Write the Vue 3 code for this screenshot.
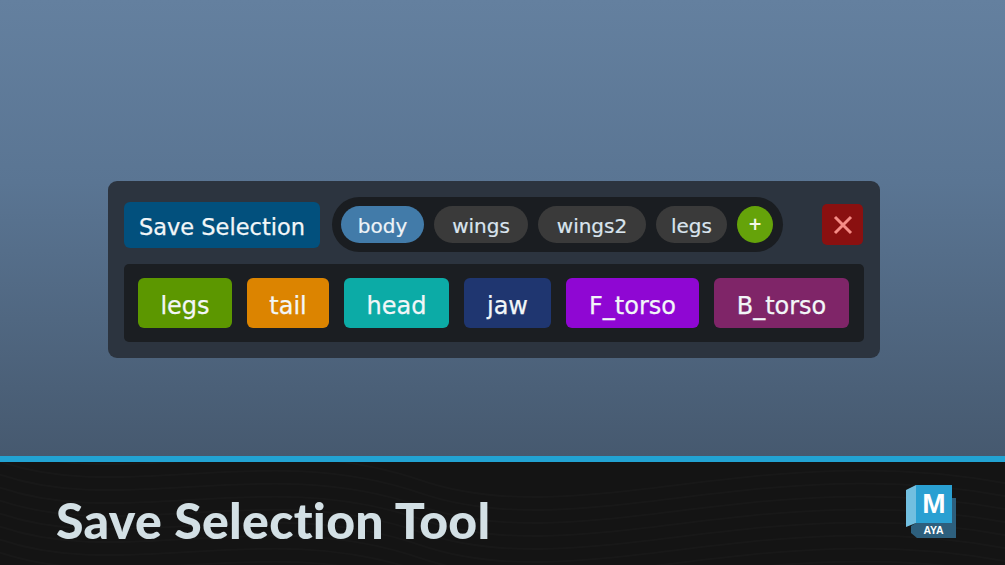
<template>
  <div class="page">
    <div class="stage">
      <div class="panel">
        <div class="top-row">
          <button class="save-btn">Save Selection</button>
          <div class="chip-tray">
            <span
              v-for="chip in chips"
              :key="chip.label"
              class="chip"
              :class="{ active: chip.active }"
              :style="{ width: chip.width + 'px' }"
            >{{ chip.label }}</span>
            <span class="add-btn">+</span>
          </div>
          <button class="close-btn" aria-label="Close">
            <svg width="20" height="20" viewBox="0 0 20 20">
              <path d="M2 2L18 18M18 2L2 18" stroke="#f58c86" stroke-width="3" fill="none" />
            </svg>
          </button>
        </div>
        <div class="set-row">
          <button
            v-for="item in sets"
            :key="item.label"
            class="set-btn"
            :style="{ width: item.width + 'px', background: item.color }"
          >{{ item.label }}</button>
        </div>
      </div>
    </div>
    <div class="rule"></div>
    <div class="footer">
      <svg class="waves" width="1005" height="103" viewBox="0 0 1005 103">
        <path
          v-for="n in 9"
          :key="n"
          :d="`M-10 ${n * 13 - 30} C 120 ${n * 13 + 20}, 260 ${n * 13 - 50}, 420 ${n * 13 + 5} S 760 ${n * 13 - 40}, 1015 ${n * 13 + 10}`"
          fill="none"
          stroke="#ffffff"
          stroke-opacity="0.018"
          stroke-width="2"
        />
      </svg>
      <h1 class="title">Save Selection Tool</h1>
      <svg class="logo" width="50" height="53" viewBox="0 0 50 53">
        <path d="M5 41L5 48L11 53L50 53L50 13L46 13L46 38L10 38Z" fill="#2d5f7d" />
        <path d="M0 5L10 0L10 38L0 42Z" fill="#72bfe0" />
        <path d="M10 0H46V38H10Z" fill="#2aa0d2" />
        <text x="28" y="28" class="logo-m">M</text>
        <text x="27.5" y="49" class="logo-aya">AYA</text>
      </svg>
    </div>
  </div>
</template>

<script setup>
const chips = [
  { label: 'body', width: 83, active: true },
  { label: 'wings', width: 94 },
  { label: 'wings2', width: 108 },
  { label: 'legs', width: 71 }
]

const sets = [
  { label: 'legs', width: 94, color: '#5c9700' },
  { label: 'tail', width: 82, color: '#dc8400' },
  { label: 'head', width: 105, color: '#0caba6' },
  { label: 'jaw', width: 87, color: '#1f3670' },
  { label: 'F_torso', width: 133, color: '#8f07d3' },
  { label: 'B_torso', width: 135, color: '#7f2568' }
]
</script>

<style>
html, body {
  margin: 0;
  background: #141414;
  overflow: hidden;
}
</style>

<style scoped>
.page {
  width: 1005px;
  height: 565px;
  display: flex;
  flex-direction: column;
  font-family: "DejaVu Sans", sans-serif;
}

.stage {
  height: 456px;
  box-sizing: border-box;
  padding: 181px 0 0 108px;
  background: linear-gradient(to bottom, #64809f 0%, #5a7593 40%, #46596f 100%);
}

.panel {
  width: 772px;
  box-sizing: border-box;
  padding: 16px;
  display: flex;
  flex-direction: column;
  gap: 12px;
  background: #2c343f;
  border-radius: 9px;
}

.top-row {
  display: flex;
  align-items: center;
  height: 55px;
}

button {
  border: none;
  padding: 0;
  font-family: inherit;
  color: #f2f6f8;
  -webkit-text-stroke: 0.25px currentColor;
}

.save-btn {
  width: 196px;
  height: 46px;
  padding-top: 5px;
  background: #02507d;
  border-radius: 6px;
  font-size: 22.5px;
}

.chip-tray {
  width: 451px;
  height: 55px;
  box-sizing: border-box;
  margin-left: 12px;
  padding-left: 9px;
  display: flex;
  align-items: center;
  gap: 10px;
  background: #1a1d21;
  border-radius: 28px;
}

.chip {
  height: 37px;
  line-height: 41px;
  text-align: center;
  border-radius: 19px;
  background: #3a3a3a;
  color: #d9e4ee;
  font-size: 20px;
  -webkit-text-stroke: 0.2px currentColor;
}

.chip.active {
  background: #427ba9;
  color: #eef3f7;
}

.add-btn {
  width: 36px;
  height: 37px;
  line-height: 37px;
  text-align: center;
  border-radius: 50%;
  background: #65a30a;
  color: #f4f8e8;
  font-size: 17px;
  font-weight: bold;
}

.close-btn {
  width: 41px;
  height: 41px;
  margin-left: 39px;
  display: flex;
  align-items: center;
  justify-content: center;
  background: #8a1010;
  border-radius: 5px;
}

.set-row {
  height: 78px;
  box-sizing: border-box;
  padding: 0 14px;
  display: flex;
  align-items: center;
  gap: 15px;
  background: #1b1e22;
  border-radius: 5px;
}

.set-btn {
  height: 50px;
  padding-top: 6px;
  border-radius: 6px;
  font-size: 24px;
}

.rule {
  height: 6px;
  background: #22a3d3;
}

.footer {
  position: relative;
  flex: 1;
  display: flex;
  align-items: center;
  justify-content: space-between;
  box-sizing: border-box;
  padding: 0 49px 0 56px;
  background: #141414;
  overflow: hidden;
}

.waves {
  position: absolute;
  left: 0;
  top: 0;
}

.title {
  position: relative;
  margin: 12px 0 0;
  font-family: Lato, sans-serif;
  font-weight: 900;
  font-size: 50px;
  color: #d3e0e5;
  letter-spacing: 0.3px;
}

.logo {
  position: relative;
  margin-bottom: 4px;
}

.logo-m {
  font-family: "Liberation Sans", sans-serif;
  font-weight: bold;
  font-size: 28px;
  fill: #ffffff;
  text-anchor: middle;
}

.logo-aya {
  font-family: "Liberation Sans", sans-serif;
  font-weight: bold;
  font-size: 10.5px;
  fill: #ffffff;
  text-anchor: middle;
}
</style>
